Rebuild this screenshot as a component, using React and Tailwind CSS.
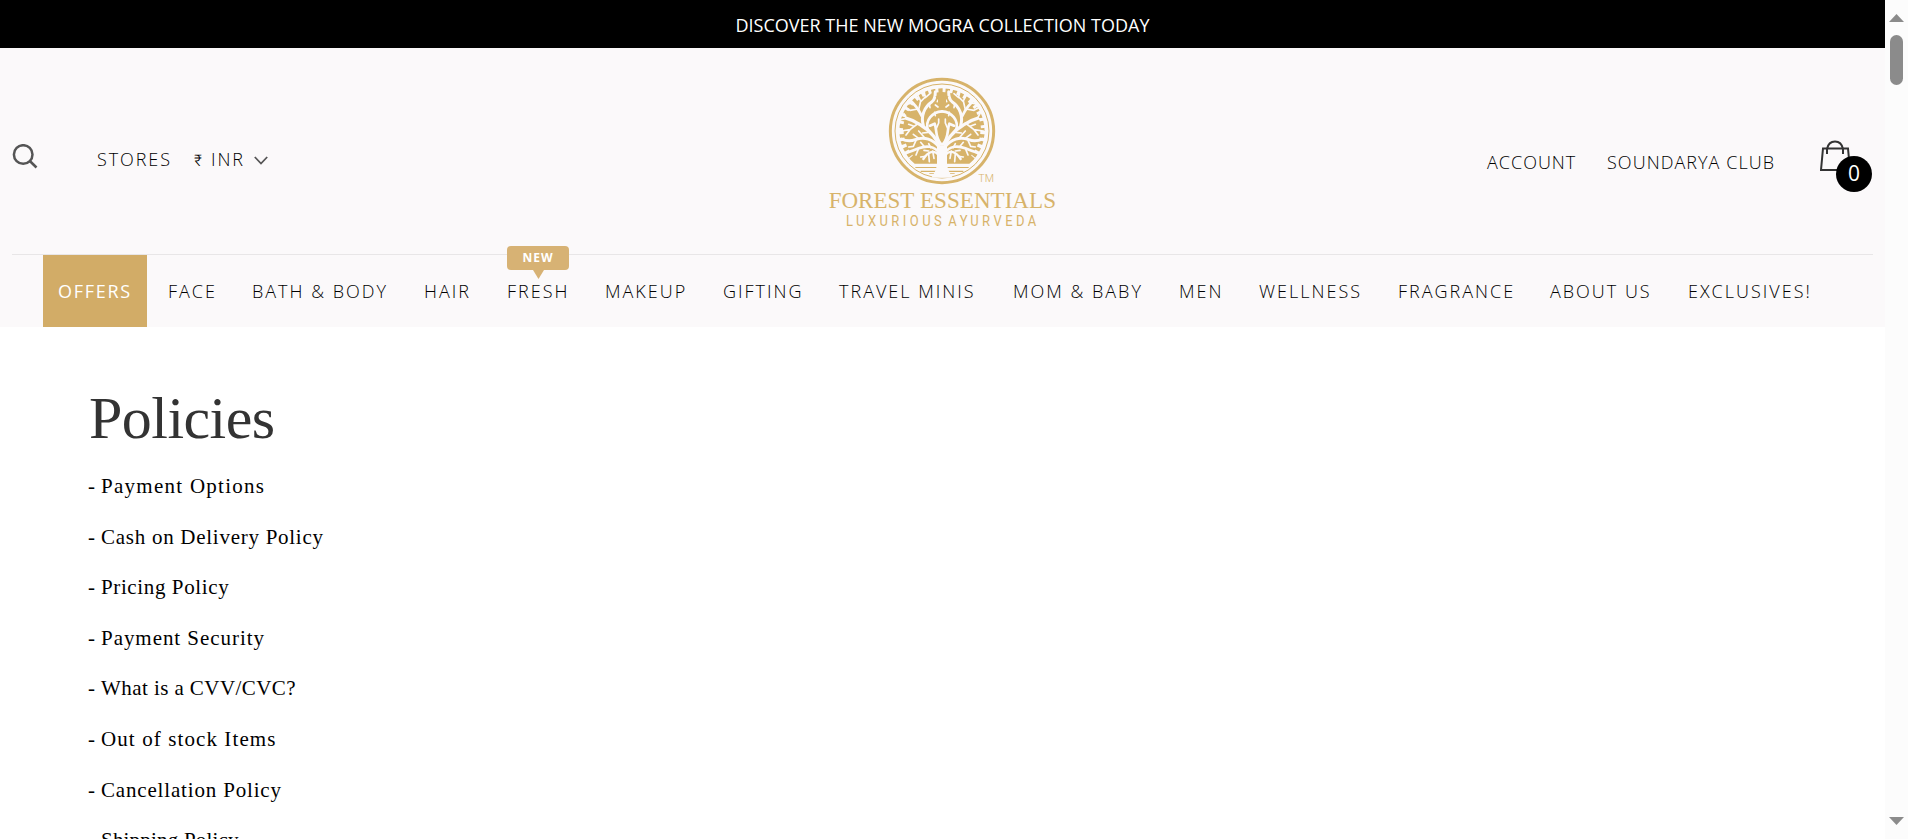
const NAV = [
  ["FACE", "w-[84px]"],
  ["BATH & BODY", "w-[172px]"],
  ["HAIR", "w-[83px]"],
  ["FRESH", "w-[98px]"],
  ["MAKEUP", "w-[118px]"],
  ["GIFTING", "w-[116px]"],
  ["TRAVEL MINIS", "w-[174px]"],
  ["MOM & BABY", "w-[166px]"],
  ["MEN", "w-[80px]"],
  ["WELLNESS", "w-[139px]"],
  ["FRAGRANCE", "w-[152px]"],
  ["ABOUT US", "w-[138px]"],
  ["EXCLUSIVES!", "w-[130px]"],
];

const POLICIES = [
  ["Payment Options", "tracking-[1.27px]"],
  ["Cash on Delivery Policy", "tracking-[0.73px]"],
  ["Pricing Policy", "tracking-[0.62px]"],
  ["Payment Security", "tracking-[0.95px]"],
  ["What is a CVV/CVC?", "tracking-[0.43px]"],
  ["Out of stock Items", "tracking-[1.1px]"],
  ["Cancellation Policy", "tracking-[0.83px]"],
  ["Shipping Policy", "tracking-[0.2px]"],
];

function Branches() {
  return (
    <g fill="none" stroke="#fbf9fa" strokeLinecap="round" strokeLinejoin="round">
      <path strokeWidth="10" d="M156 222C153 190 126 160 98 144C84 134 72 128 56 124" />
      <path strokeWidth="8" d="M120 160C110 128 134 105 162 103" />
      <path strokeWidth="9" d="M106 146C98 118 108 90 132 74Q142 66 142 44" />
      <path strokeWidth="8" d="M160 202C140 182 148 160 140 140L126 146" />
      <path strokeWidth="9" d="M154 212C136 186 108 178 82 188Q62 196 40 186" />
      <path strokeWidth="8" d="M154 230C140 204 112 206 92 214Q78 220 60 226" />
      <path strokeWidth="7" d="M154 236C138 216 120 224 106 246" />
      <path strokeWidth="8" d="M102 118C92 98 84 84 66 70" />
      <path
        strokeWidth="5"
        d="M92 138L66 158L38 162M78 148L62 142M66 158L54 174M56 124L38 128M56 124L48 110M90 96L66 100L52 92M92 98L98 72L88 52M98 74L112 60L108 42M112 62L126 50M124 80L126 92M142 84L150 90M140 106L142 116M108 180L92 162M92 184L76 172M84 190L76 208L62 210M108 208L98 196M92 214L84 234M128 212L122 200M122 222L108 220M112 238L98 240M122 230L124 254M134 222L138 244M154 62L148 74M120 166L104 168M74 78L54 82M146 152L152 138V126"
      />
    </g>
  );
}

function Logo() {
  return (
    <svg className="block h-[170px] w-[245px]" viewBox="0 0 735 510" fill="#d7b36a">
      <circle cx="366" cy="183" r="155" fill="none" stroke="#d7b36a" strokeWidth="9" />
      <circle cx="366" cy="183" r="141" fill="none" stroke="#d7b36a" strokeWidth="3" />
      <path d="M262 257A128 128 0 1 1 470 257Q460 272 448 281H284Q272 272 262 257Z" />
      <path d="M286 291H446V294H286ZM302 302H430V306H302ZM328 310H404V312H328Z" />
      <path d="M241 183A125 125 0 0 1 491 183" fill="none" stroke="#fbf9fa" strokeWidth="16" strokeDasharray="9 13" />
      <path d="M241 183A125 125 0 0 0 271 263M491 183A125 125 0 0 1 461 263" fill="none" stroke="#fbf9fa" strokeWidth="20" strokeDasharray="10 11" />
      <g transform="translate(204 21)">
        <Branches />
        <g transform="translate(324 0) scale(-1 1)"><Branches /></g>
        <path fill="#fbf9fa" d="M147 205H177V262Q180 284 194 302H130Q144 284 147 262Z" />
        <path d="M162 138Q167 154 172 162Q166 172 162 188Q158 172 152 162Q157 154 162 138Z" />
        <path d="M162 48L168 58H182L174 68V79H150V68L142 58H156Z" />
      </g>
      <text x="475" y="336" fontSize="31" fontFamily="Roboto, sans-serif" fontWeight="300" textLength="47" lengthAdjust="spacingAndGlyphs">TM</text>
      <text x="26" y="413" fontSize="68" fontFamily="'Liberation Serif', serif" textLength="257" lengthAdjust="spacingAndGlyphs">FOREST</text>
      <text x="300" y="413" fontSize="68" fontFamily="'Liberation Serif', serif" textLength="408" lengthAdjust="spacingAndGlyphs">ESSENTIALS</text>
      <text x="78" y="467" fontSize="45" fontFamily="Roboto, sans-serif" letterSpacing="12" textLength="581" lengthAdjust="spacingAndGlyphs" wordSpacing="-12">LUXURIOUS AYURVEDA</text>
    </svg>
  );
}

function Scrollbar() {
  return (
    <div className="flex w-[23px] shrink-0 flex-col items-center bg-[#fcfcfc] pt-[14px] pb-[14px]">
      <svg className="h-2 w-[15px]" viewBox="0 0 15 8" fill="#8b8b8b"><path d="M7.5 0L15 8H0Z" /></svg>
      <div className="mt-[13px] h-[50px] w-[13px] rounded-full bg-[#8b8b8b]" />
      <svg className="mt-auto h-2 w-[15px]" viewBox="0 0 15 8" fill="#8b8b8b"><path d="M0 0H15L7.5 8Z" /></svg>
    </div>
  );
}

export default function App() {
  return (
    <div className="flex h-[839px] w-[1908px] overflow-hidden bg-white font-['Open_Sans',sans-serif]">
      <div className="flex w-[1885px] shrink-0 flex-col overflow-hidden">
        <div className="flex h-12 shrink-0 items-center justify-center bg-black pt-[3px] text-[18px] font-medium text-white">
          <span>DISCOVER THE NEW MOGRA COLLECTION TODAY</span>
        </div>
        <header className="flex h-[279px] shrink-0 flex-col bg-[#fbf9fa]">
          <div className="mx-3 flex h-[207px] border-b border-[#e8e6e7]">
            <div className="flex w-[808px] pt-24">
              <svg className="h-[26px] w-[26px]" viewBox="0 0 26 26" fill="none" stroke="#555" strokeWidth="2.5">
                <circle cx="11.2" cy="10.5" r="9.3" />
                <path d="M17.8 17L24.5 23.5" />
              </svg>
              <div className="mt-px ml-[59px] flex h-7 items-center text-[18px] text-black">
                <span className="w-[97px] font-[350] tracking-[1.9px]">STORES</span>
                <span className="w-[60px] whitespace-nowrap font-light tracking-[1.9px] text-black">
                  <span className="inline-block w-[17px] font-['Roboto',sans-serif] text-[16px] font-light">₹</span>
                  INR
                </span>
                <svg className="mt-[3px] h-[9px] w-[14px]" viewBox="0 0 14 9" fill="none" stroke="#555" strokeWidth="1.8"><path d="M.8 1L7 7.5L13.2 1" /></svg>
              </div>
            </div>
            <div className="pt-[22px]"><Logo /></div>
            <div className="ml-auto flex pt-[92px] text-[18px] font-light text-black">
              <span className="mt-[9px] w-[120px] tracking-[1px]">ACCOUNT</span>
              <span className="mt-[9px] w-[213px] tracking-[1.05px]">SOUNDARYA CLUB</span>
              <div className="relative w-[53px]">
                <svg className="h-[32px] w-[32px]" viewBox="0 0 32 32" fill="none" stroke="#333" strokeWidth="2">
                  <path d="M3 8.5H28L30 30H1Z" />
                  <path d="M7 14V9C9 -1 21 -1 23 9V14" />
                </svg>
                <span className="absolute top-4 left-4 flex h-9 w-9 items-center justify-center rounded-full bg-black text-[21px] font-medium text-white">0</span>
              </div>
            </div>
          </div>
          <nav className="flex h-[72px] items-center pl-[43px] text-[18px] font-light tracking-[2px] text-black">
            <a className="mr-[21px] flex h-full w-[104px] items-center bg-[#d2ac67] pl-[15px] font-normal tracking-[1.7px] text-white">OFFERS</a>
            {NAV.map(([label, width]) => (
              <a key={label} className={`relative shrink-0 whitespace-nowrap ${width}`}>
                {label}
                {label === "FRESH" && (
                  <span className="absolute -top-[32px] left-0 flex h-6 w-[62px] items-center justify-center rounded bg-[#d7b274] text-xs font-bold tracking-[1px] text-white">
                    NEW
                    <svg className="absolute top-6 left-[26px] h-[9px] w-[11px]" viewBox="0 0 11 9" fill="#d7b274"><path d="M0 0H11L5.5 9Z" /></svg>
                  </span>
                )}
              </a>
            ))}
          </nav>
        </header>
        <main className="shrink-0 pt-[56px] pl-[88px] font-['Liberation_Serif',serif]">
          <h1 className="h-[78px] pl-px text-[60px] leading-[70px] tracking-[-0.55px] text-[#333]">Policies</h1>
          <ul className="text-[21px] leading-[50.6px] text-black">
            {POLICIES.map(([label, spacing]) => (
              <li key={label} className="flex">
                <span className="w-[13px]">-</span>
                <span className={spacing}>{label}</span>
              </li>
            ))}
          </ul>
        </main>
      </div>
      <Scrollbar />
    </div>
  );
}
